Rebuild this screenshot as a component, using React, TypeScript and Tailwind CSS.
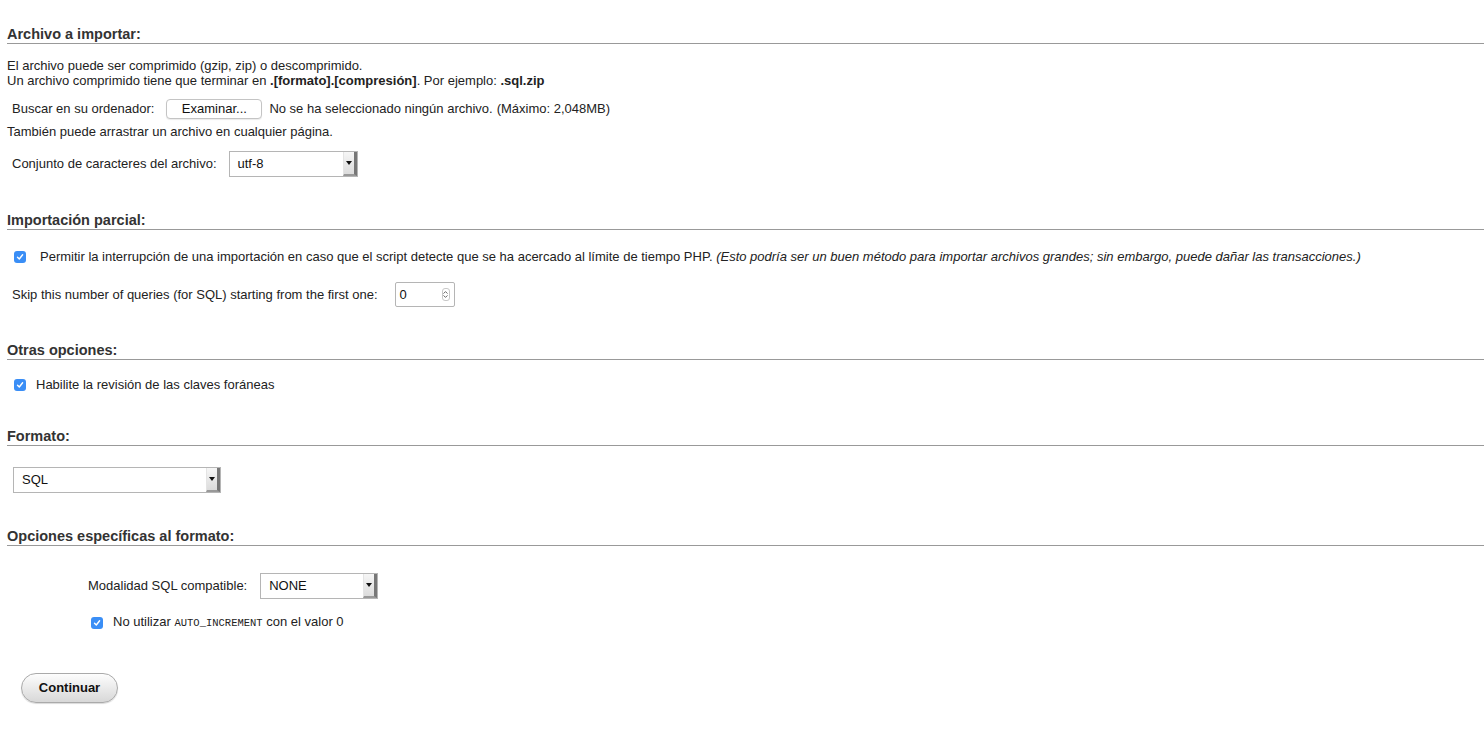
import { ReactNode } from "react"

const font = { fontFamily: '"Liberation Sans", Arial, sans-serif' }

function SectionTitle({ children, className = "" }: { children: ReactNode; className?: string }) {
  return (
    <h3 className={`text-[14.5px] leading-[17px] font-bold text-[#333] border-b border-[#999] ${className}`}>
      {children}
    </h3>
  )
}

function Check() {
  return (
    <span className="inline-flex w-[12px] h-[12px] rounded-[3px] bg-[#3a8ef6] items-center justify-center shrink-0">
      <svg width="8" height="8" viewBox="0 0 8 8" fill="none">
        <path d="M1.5 4.2 L3.3 6 L6.6 1.8" stroke="white" strokeWidth="1.4" strokeLinecap="round" strokeLinejoin="round" />
      </svg>
    </span>
  )
}

function Select({ value, width }: { value: string; width: string }) {
  return (
    <div className={`flex h-[26px] border border-[#b5b5b5] bg-white ${width}`}>
      <span className="flex-1 pl-[8px] flex items-center text-[13px] text-[#111]">{value}</span>
      <span className="w-[14px] flex items-center justify-center bg-gradient-to-b from-[#f6f6f6] to-[#dcdcdc] border-l border-[#e4e4e4] border-r-[3px] border-r-[#777] border-b-2 border-b-[#999]">
        <svg width="6" height="4" viewBox="0 0 6 4">
          <path d="M0 0 H6 L3 4 Z" fill="#111" />
        </svg>
      </span>
    </div>
  )
}

export default function App() {
  return (
    <div style={font} className="bg-white w-[1484px] h-[732px] pl-[7px] pt-[26px] text-[13px] text-[#222] overflow-hidden">
      <SectionTitle>Archivo a importar:</SectionTitle>
      <p className="mt-[14px] leading-[15px]">
        El archivo puede ser comprimido (gzip, zip) o descomprimido.
        <br />
        Un archivo comprimido tiene que terminar en <b>.[formato].[compresión]</b>. Por ejemplo: <b>.sql.zip</b>
      </p>
      <div className="mt-[11px] ml-[5px] flex items-center h-[20px]">
        <span>Buscar en su ordenador:</span>
        <span className="ml-[12px] w-[96px] h-[20px] rounded-[4px] border border-[#c4c4c4] bg-white flex items-center justify-center text-[13px] text-[#111] shadow-[0_1px_1px_rgba(0,0,0,0.08)]">
          Examinar...
        </span>
        <span className="ml-[7px]">No se ha seleccionado ningún archivo.</span>
        <span className="ml-[4px]">(Máximo: 2,048MB)</span>
      </div>
      <p className="mt-[5px] leading-[15px]">También puede arrastrar un archivo en cualquier página.</p>
      <div className="mt-[12px] ml-[5px] flex items-center gap-[12px]">
        <span>Conjunto de caracteres del archivo:</span>
        <Select value="utf-8" width="w-[129px]" />
      </div>

      <SectionTitle className="mt-[35px]">Importación parcial:</SectionTitle>
      <div className="mt-[19px] ml-[7px] flex items-center leading-[15px]">
        <Check />
        <span className="ml-[14px]">
          Permitir la interrupción de una importación en caso que el script detecte que se ha acercado al límite de tiempo PHP.{" "}
          <i>(Esto podría ser un buen método para importar archivos grandes; sin embargo, puede dañar las transacciones.)</i>
        </span>
      </div>
      <div className="mt-[18px] ml-[5px] flex items-center">
        <span>Skip this number of queries (for SQL) starting from the first one:</span>
        <div className="ml-[17px] w-[60px] h-[25px] border border-[#b5b5b5] rounded-[2px] bg-white flex items-center pl-[4px] pr-[4px]">
          <span className="flex-1 text-[#111]">0</span>
          <span className="w-[8px] h-[13px] border border-[#c8c8c8] rounded-[3px] flex flex-col items-center justify-center gap-[1px]">
            <svg width="5" height="3" viewBox="0 0 5 3"><path d="M0.5 2.6 L2.5 0.6 L4.5 2.6" stroke="#555" strokeWidth="0.9" fill="none" /></svg>
            <svg width="5" height="3" viewBox="0 0 5 3"><path d="M0.5 0.4 L2.5 2.4 L4.5 0.4" stroke="#555" strokeWidth="0.9" fill="none" /></svg>
          </span>
        </div>
      </div>

      <SectionTitle className="mt-[35px]">Otras opciones:</SectionTitle>
      <div className="mt-[17px] ml-[7px] flex items-center leading-[15px]">
        <Check />
        <span className="ml-[10px]">Habilite la revisión de las claves foráneas</span>
      </div>

      <SectionTitle className="mt-[36px]">Formato:</SectionTitle>
      <div className="mt-[21px] ml-[6px]">
        <Select value="SQL" width="w-[208px]" />
      </div>

      <SectionTitle className="mt-[35px]">Opciones específicas al formato:</SectionTitle>
      <div className="mt-[27px] ml-[81px] flex items-center gap-[13px]">
        <span>Modalidad SQL compatible:</span>
        <Select value="NONE" width="w-[118px]" />
      </div>
      <div className="mt-[15px] ml-[84px] flex items-center leading-[15px]">
        <Check />
        <span className="ml-[10px]">
          No utilizar{" "}
          <code style={{ fontFamily: '"Liberation Mono", "Courier New", monospace' }} className="text-[10.5px]">
            AUTO_INCREMENT
          </code>{" "}
          con el valor 0
        </span>
      </div>

      <button className="mt-[42px] ml-[14px] w-[97px] h-[30px] rounded-full border border-[#aaa] bg-gradient-to-b from-[#fdfdfd] to-[#d8d8d8] text-[13px] font-bold text-[#111] shadow-[0_1px_1px_rgba(0,0,0,0.15)]">
        Continuar
      </button>
    </div>
  )
}
